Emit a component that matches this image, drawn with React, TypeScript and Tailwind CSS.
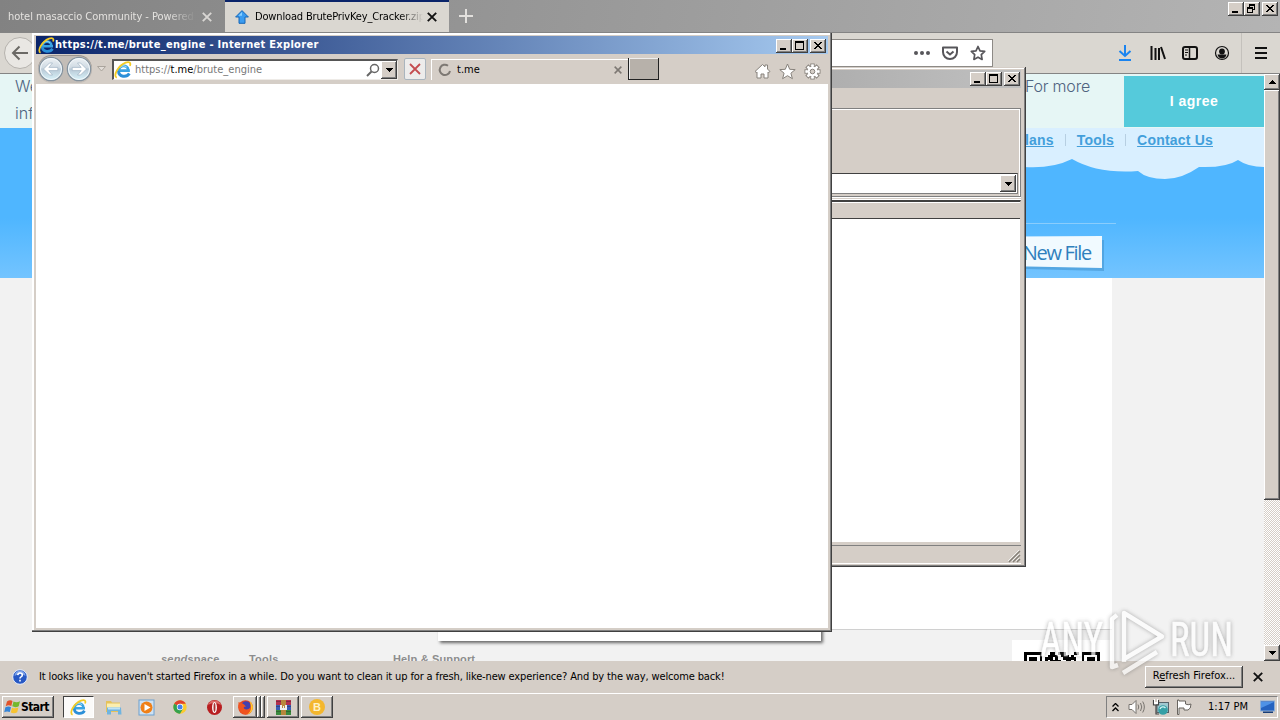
import type { ReactNode } from "react";

const UI = "font-['DejaVu_Sans_Condensed','DejaVu_Sans',sans-serif] [font-stretch:condensed]";
const RAISED =
    "bg-[#d5cec7] shadow-[inset_-1px_-1px_0_#404040,inset_1px_1px_0_#fff,inset_-2px_-2px_0_#808080]";

type CaptionKind = "min" | "max" | "restore" | "close";

function CaptionButton({ kind, className = "" }: { kind: CaptionKind; className?: string }) {
    return (
        <button className={`block h-[14px] w-4 shrink-0 ${RAISED} ${className}`}>
            <svg width="16" height="14" fill="none" stroke="#000" shapeRendering="crispEdges">
                {kind === "min" && <path d="M4 10h6" strokeWidth="2" />}
                {kind === "max" && (
                    <>
                        <path d="M3.5 3v8M11.5 3v8M3 10.5h9" />
                        <path d="M3 3h9" strokeWidth="2" />
                    </>
                )}
                {kind === "restore" && (
                    <>
                        <path d="M5.5 3v3M10.5 2v6M9 7.5h2M3.5 5v6M8.5 5v6M3 10.5h6" />
                        <path d="M5 3h6M3 6h6" strokeWidth="2" />
                    </>
                )}
                {kind === "close" && (
                    <path d="M4 3l7 7M5 3l7 7M11 3l-7 7M12 3l-7 7" shapeRendering="auto" />
                )}
            </svg>
        </button>
    );
}

function CaptionButtons({ restore = false }: { restore?: boolean }) {
    return (
        <div className="flex shrink-0">
            <CaptionButton kind="min" />
            <CaptionButton kind={restore ? "restore" : "max"} />
            <CaptionButton kind="close" className="ml-[2px]" />
        </div>
    );
}

function IeIcon({ size = 17 }: { size?: number }) {
    return (
        <svg width={size} height={size} viewBox="0 0 17 17" fill="none">
            <path d="M15 9.200H4.600c0-6 8.600-6 8.800-.6" stroke="#3aa3e2" strokeWidth="2.6" />
            <path d="M4.300 9.500c.1 6 7.800 6.200 10.200 2.300" stroke="#2b8fd8" strokeWidth="2.800" />
            <path d="M5.300 6.200c1.700-2.300 5-2.300 6.700-.3" stroke="#a5e0f9" strokeWidth="1" />
            <path
                d="M2.600 15.800C-1.200 14.200 3.600 4.600 11 1.600c3.400-1.300 5.300.1 4 2.900"
                stroke="#f3cb25"
                strokeWidth="1.700"
            />
        </svg>
    );
}

function Arrow({ up = false }: { up?: boolean }) {
    return (
        <svg width="7" height="4" shapeRendering="crispEdges">
            <path d={up ? "M0 4h7L3.5 0z" : "M0 0h7L3.5 4z"} />
        </svg>
    );
}

/* ---------- Firefox ---------- */

function CloseX({ color, size = 10 }: { color: string; size?: number }) {
    return (
        <svg width={size} height={size} viewBox="0 0 10 10" stroke={color} strokeWidth="1.9">
            <path d="M.8.8l8.4 8.4M9.2.8L.8 9.2" />
        </svg>
    );
}

function TabStrip() {
    return (
        <div className="flex h-8 shrink-0 bg-[linear-gradient(100deg,#828282,#b4b4b4)] text-[11px]">
            <div className="flex w-[225px] items-center pl-2 pt-[2px]">
                <span className="w-[188px] overflow-hidden whitespace-nowrap tracking-[-0.04px] text-[#e4e2df] [mask-image:linear-gradient(90deg,#000_160px,transparent_188px)]">
                    hotel masaccio Community - Powered by
                </span>
                <span className="ml-[6px]">
                    <CloseX color="#d8d6d3" />
                </span>
            </div>
            <div className="flex w-56 items-center border-t-2 border-[#0a246a] bg-[#dad7d1] pl-[10px]">
                <svg width="14" height="14" viewBox="0 0 14 14">
                    <path d="M7 .6L13.4 7H10v6.3H4V7H.6z" fill="#3b9cf0" stroke="#1667b8" />
                    <path d="M7 2L3.5 5.8H7z" fill="#8bd0ff" />
                </svg>
                <span className="ml-[6px] w-[169px] overflow-hidden whitespace-nowrap pt-px tracking-[-0.16px] text-black [mask-image:linear-gradient(90deg,#000_145px,transparent_168px)]">
                    Download BrutePrivKey_Cracker.zip
                </span>
                <span className="ml-[3px]">
                    <CloseX color="#111" />
                </span>
            </div>
            <svg className="ml-[10px] mt-[9px]" width="14" height="14" stroke="#e2e0dd" strokeWidth="2">
                <path d="M7 0v14M0 7h14" />
            </svg>
            <div className="ml-auto mr-[2px] mt-[2px]">
                <CaptionButtons restore />
            </div>
        </div>
    );
}

function NavBar() {
    return (
        <div className="flex h-[42px] shrink-0 items-center border-y border-[#848484] bg-[#dad7d1]">
            <div className="ml-1 flex size-8 shrink-0 items-center justify-center rounded-full border border-[#b5b2ad] bg-[#e9e7e3]">
                <svg width="18" height="16" fill="none" stroke="#6b6965" strokeWidth="2">
                    <path d="M17 8H2M8.5 1.5L2 8l6.500 6.500" />
                </svg>
            </div>
            <div className="ml-40 flex h-7 w-[797px] items-center justify-end border border-[#8d8a86] bg-white pr-[6px]">
                <svg width="16" height="4" fill="#57565a">
                    <circle cx="2" cy="2" r="2" />
                    <circle cx="8" cy="2" r="2" />
                    <circle cx="14" cy="2" r="2" />
                </svg>
                <svg className="ml-[12px]" width="16" height="16" fill="none" stroke="#57565a" strokeWidth="2">
                    <path d="M1 2.500h14v4.500c0 4-3 7-7 7s-7-3-7-7z" strokeLinejoin="round" />
                    <path d="M4.500 6.500L8 9.500l3.500-3" />
                </svg>
                <svg className="ml-3" width="16" height="16" fill="none" stroke="#57565a" strokeWidth="1.7">
                    <path d="M8 1.500l2 4.300 4.700.6-3.400 3.300.8 4.700L8 12.200l-4.100 2.200.8-4.700L1.300 6.400 6 5.800z" strokeLinejoin="round" />
                </svg>
            </div>
            <div className="ml-auto flex h-full items-center">
                <svg width="14" height="16" fill="none" stroke="#1a84f0" strokeWidth="2">
                    <path d="M7 0v11M1.500 6L7 11l5.500-5M1 15h12" />
                </svg>
                <svg className="ml-[18px]" width="16" height="14" stroke="#111" strokeWidth="2">
                    <path d="M1.500 0v14M5.500 2v12M9 2v12M11 1l4 12" />
                </svg>
                <svg className="ml-4" width="16" height="14" fill="none" stroke="#111" strokeWidth="2">
                    <rect x="1" y="1" width="14" height="12" rx="2" />
                    <path d="M7.500 1v12" strokeWidth="1.500" />
                    <path d="M3 4h3M3 6.500h3M3 9h2" strokeWidth="1" />
                </svg>
                <svg className="ml-4" width="16" height="16">
                    <circle cx="8" cy="8" r="6.500" fill="none" stroke="#111" strokeWidth="1.200" />
                    <circle cx="8" cy="6.500" r="2.900" fill="#111" />
                    <path d="M3.500 9.500h9c-.5 2.500-2.400 4-4.500 4s-4-1.500-4.500-4z" fill="#111" />
                </svg>
                <i className="ml-[11px] h-full w-px bg-[#c4c1bc]" />
                <svg className="ml-[13px] mr-[13px]" width="12" height="12" stroke="#111" strokeWidth="2">
                    <path d="M0 1h12M0 6h12M0 11h12" />
                </svg>
            </div>
        </div>
    );
}

function Scrollbar() {
    return (
        <div className="flex w-4 flex-col bg-[repeating-conic-gradient(#d5cec7_0_25%,#fff_0_50%)] bg-[length:2px_2px]">
            <div className={`flex h-4 items-center justify-center ${RAISED}`}>
                <Arrow up />
            </div>
            <div className={`h-[410px] ${RAISED}`} />
            <div className={`mt-auto flex h-4 items-center justify-center ${RAISED}`}>
                <Arrow />
            </div>
        </div>
    );
}

const QR_ROWS = [
    "11111110001101110001101111111",
    "10000010011110111010001000001",
    "10111010111010011111001011101",
    "10111010101111001101001011101",
];

function QrCode() {
    return (
        <div className="h-[21px] w-[100px] overflow-hidden bg-white pl-3 pt-3">
            <svg width="76" height="10.480" viewBox="0 0 29 4" shapeRendering="crispEdges">
                {QR_ROWS.map((row, y) =>
                    [...row].map((c, x) =>
                        c === "1" ? <rect key={`${x}-${y}`} x={x} y={y} width="1" height="1" /> : null
                    )
                )}
            </svg>
        </div>
    );
}

function Page() {
    return (
        <div className="flex min-w-0 flex-1 flex-col overflow-hidden bg-[#f2f2f2] font-['Liberation_Sans',sans-serif] [font-stretch:normal]">
            <div className="flex h-[54px] shrink-0 bg-[#e6f6f5] pt-[2px] text-[#4f6380]">
                <div className="flex flex-1 justify-between whitespace-nowrap pr-[34px] font-['Inter',sans-serif] text-[16px] font-light leading-[27px]">
                    <p className="ml-[15px] -mt-[3px]">
                        We use cookies
                        <br />
                        information
                    </p>
                    <p className="-mt-[3px] tracking-[-0.2px]">For more</p>
                </div>
                <button className="mb-px w-[140px] bg-[#55cadb] text-[14px] font-bold tracking-[0.5px] text-white">
                    I agree
                </button>
            </div>

            <div className="relative h-[150px] shrink-0 bg-[linear-gradient(#4fb6ff_60%,#73c4ff)]">
                <svg className="absolute right-0 top-0" width="264" height="56">
                    <path
                        d="M0 0H264V39Q248 39 238 32Q226 40 199 39Q182 51 165 51Q147 51 138 43Q98 46 72 31Q52 41 24 39L0 36Z"
                        fill="#d9efff"
                    />
                </svg>
                <div className="relative flex justify-end pr-[51px] pt-1 text-[14px] font-bold leading-[16px] text-[#439fdb]">
                    <a className="tracking-[0.2px] underline">Plans</a>
                    <i className="mx-[11px] mt-[2px] h-3 w-px bg-[#b7cfe2]" />
                    <a className="tracking-[0.2px] underline">Tools</a>
                    <i className="mx-[11px] mt-[2px] h-3 w-px bg-[#b7cfe2]" />
                    <a className="tracking-[0.2px] underline">Contact Us</a>
                </div>
                <div className="ml-auto mr-[148px] mt-[75px] h-px w-[300px] bg-[#8acdfc]" />
                <div className="relative ml-auto mr-[159px] mt-[12px] h-[35px] w-[160px]">
                    <svg className="absolute inset-0" width="162" height="37">
                        <path d="M0 4H159V35L0 31z" fill="#4594cf" opacity=".6" />
                        <path d="M0 1L157 0V32L0 29z" fill="#f1faff" />
                    </svg>
                    <span className="absolute right-[14px] top-[4px] whitespace-nowrap font-['Open_Sans',sans-serif] text-[20px] leading-[26px] tracking-[-1.300px] text-[#2f80bd]">
                        Upload New File
                    </span>
                </div>
            </div>

            <div className="mx-[152px] h-[352px] shrink-0 border-b border-[#d0d0d0] bg-white" />
            <div className="relative flex flex-1 pl-[161px] text-[11px] font-bold text-[#8d8d8d]">
                <span className="mt-[21px] w-[88px] tracking-[0.2px]">
                    <i>send</i>space
                </span>
                <span className="mt-[21px] w-[144px] tracking-[0.2px]">Tools</span>
                <span className="mt-[21px] tracking-[0.15px]">Help &amp; Support</span>
                <div className="absolute left-[438px] -top-2 h-[19px] w-[383px] bg-white shadow-[2px_2px_3px_#666]" />
                <div className="ml-auto mr-[152px] mt-[10px]">
                    <QrCode />
                </div>
            </div>
        </div>
    );
}

function Notification() {
    return (
        <div className="flex h-8 shrink-0 items-center bg-[#d5cec7] text-[11px] text-black">
            <svg className="ml-3" width="16" height="16">
                <circle cx="8" cy="8" r="7.300" fill="#2758c4" stroke="#e8eefb" />
                <path d="M2.500 7A5.500 5.500 0 0113.500 7Q8 3 2.500 7z" fill="#7da2e8" />
                <path d="M5.700 6.200Q6 4 8 4q2.300 0 2.300 2 0 1.200-1.300 1.900-1 .5-1 1.600M8 10.800v1.700" fill="none" stroke="#fff" strokeWidth="1.600" />
            </svg>
            <span className="ml-[11px] whitespace-nowrap pt-px tracking-[-0.135px]">
                It looks like you haven't started Firefox in a while. Do you want to clean it up for a fresh,
                like-new experience? And by the way, welcome back!
            </span>
            <button className={`-mt-px ml-auto h-[22px] w-[98px] whitespace-nowrap ${RAISED}`}>
                R<u>e</u>fresh Firefox...
            </button>
            <span className="ml-[10px] mr-[17px]">
                <CloseX color="#111" />
            </span>
        </div>
    );
}

/* ---------- Archive window behind IE ---------- */

function ArchiveWindow() {
    return (
        <div className="absolute left-[320px] top-[67px] flex h-[500px] w-[706px] flex-col bg-[#d5cec7] p-[3px] pr-[5px] shadow-[inset_-1px_-1px_0_#404040,inset_1px_1px_0_#d5cec7,inset_-2px_-2px_0_#808080,inset_2px_2px_0_#fff]">
            <div className="flex h-[18px] shrink-0 items-center justify-end bg-[linear-gradient(90deg,#808080,#c0c0c0)] pr-px">
                <CaptionButtons />
            </div>
            <div className="mt-5 flex h-[89px] shrink-0 flex-col justify-end border border-[#808080] pb-[2px] pr-[2px] shadow-[inset_0_1px_0_#fff,inset_-1px_0_0_#fff,0_1px_0_#fff]">
                <div className="flex h-[21px] justify-end border border-[#808080] border-t-[#404040] bg-white p-px">
                    <div className={`flex w-4 items-center justify-center ${RAISED}`}>
                        <Arrow />
                    </div>
                </div>
            </div>
            <div className="mt-[3px] flex-1 border border-[#d5cec7] border-t-2 border-t-[#404040] bg-white shadow-[0_-1px_0_#fff]">
                <div className="h-[17px] border-b border-[#404040] bg-[#d5cec7] shadow-[inset_0_1px_0_#fff]" />
            </div>
            <div className="mt-[2px] flex h-[19px] shrink-0 items-end justify-end border-b border-t border-b-white border-t-[#808080]">
                <svg width="13" height="13" stroke="#858078" strokeWidth="1.500">
                    <path d="M1 12L12 1M5 12l7-7M9 12l3-3" />
                    <path d="M0 11L11 0M4 11l7-7M8 11l3-3" stroke="#fff" strokeWidth=".7" />
                </svg>
            </div>
        </div>
    );
}

/* ---------- Internet Explorer ---------- */

function NavCircle({ flip = false }: { flip?: boolean }) {
    return (
        <svg className={flip ? "-scale-x-100" : ""} width="26" height="26" viewBox="0 0 26 26">
            <defs>
                <linearGradient id="orb" x2="0" y2="1">
                    <stop stopColor="#eef2f5" />
                    <stop offset=".45" stopColor="#cfdae3" />
                    <stop offset=".5" stopColor="#b9c9d6" />
                    <stop offset="1" stopColor="#d9f4fb" />
                </linearGradient>
            </defs>
            <circle cx="13" cy="13" r="11.700" fill="url(#orb)" stroke="#84929e" strokeWidth="1.200" />
            <circle cx="13" cy="13" r="10.500" fill="none" stroke="#f2f8fb" />
            <path
                d="M5.500 13l6-6h3l-3.700 4.400h9v3.200h-9l3.700 4.400h-3z"
                fill="#fff"
                stroke="#9fb3c4"
                strokeWidth=".7"
            />
        </svg>
    );
}

function GearIcon() {
    return (
        <svg width="17" height="17" viewBox="-8.500 -8.500 17 17">
            <g fill="#fff" stroke="#87827c" strokeWidth="1">
                {[0, 45, 90, 135].map((a) => (
                    <rect key={a} x="-1.700" y="-7.500" width="3.400" height="15" transform={`rotate(${a})`} />
                ))}
                <circle r="5.300" />
            </g>
            <g fill="#fff">
                {[0, 45, 90, 135].map((a) => (
                    <rect key={a} x="-1.200" y="-6.900" width="2.400" height="13.800" transform={`rotate(${a})`} />
                ))}
            </g>
            <circle r="2.300" fill="#d5cec7" stroke="#87827c" />
        </svg>
    );
}

function IeWindow() {
    return (
        <div className="absolute left-8 top-[33px] flex h-[599px] w-[800px] flex-col bg-[#d5cec7] p-[3px] pl-1 pr-1 shadow-[inset_-1px_-1px_0_#404040,inset_-2px_-2px_0_#808080,inset_2px_2px_0_#fff]">
            <div className="flex h-[18px] shrink-0 items-center bg-[linear-gradient(90deg,#0a246a,#a6caf0)] pl-[2px] pr-[2px]">
                <IeIcon />
                <span className="whitespace-nowrap pt-px text-[11px] font-bold tracking-[0.3px] text-white">
                    https://t.me/brute_engine - Internet Explorer
                </span>
                <div className="ml-auto pt-px">
                    <CaptionButtons />
                </div>
            </div>
            <div className="flex h-[30px] shrink-0 items-center text-[11px]">
                <div className="ml-[2px] flex h-[27px] items-center gap-[2px] rounded-full bg-[#c3bdb7] shadow-[0_-1px_0_#99938e]">
                    <NavCircle />
                    <NavCircle flip />
                </div>
                <svg className="ml-[5px]" width="9" height="6" fill="#e2ddd8" stroke="#aaa49d">
                    <path d="M.5.500h8L4.500 5z" />
                </svg>
                <div className="ml-[6px] flex h-[21px] w-[286px] items-center border border-[#eeebe7] border-l-2 border-t-2 border-l-[#555] border-t-[#555] bg-white">
                    <IeIcon size={18} />
                    <span className="ml-[3px] whitespace-nowrap pt-px tracking-[0.010px] text-[#777]">
                        https://<span className="text-black">t.me</span>/brute_engine
                    </span>
                    <svg className="ml-auto mr-px" width="14" height="14" fill="none" stroke="#666" strokeWidth="1.500">
                        <circle cx="8.500" cy="5.500" r="4" />
                        <path d="M5.500 8.500L1 13" strokeWidth="2" />
                    </svg>
                    <div className={`flex h-[18px] w-4 items-center justify-center ${RAISED}`}>
                        <Arrow />
                    </div>
                </div>
                <div className="ml-[6px] flex h-[22px] w-[22px] items-center justify-center rounded-[2px] border border-[#aab5be] bg-[#edeceb]">
                    <svg width="12" height="12" stroke="#c44c50" strokeWidth="1.800">
                        <path d="M1 1l10 10M11 1L1 11" />
                    </svg>
                </div>
                <div className="ml-[5px] flex h-[21px] w-[198px] items-center border-l border-t border-white pl-[6px] pr-[7px]">
                    <svg width="14" height="14" fill="none" stroke="#7d7873" strokeWidth="2">
                        <path d="M10 2.700A5.200 5.200 0 1012 8" />
                    </svg>
                    <span className="ml-[5px] pt-px text-black">t.me</span>
                    <span className="ml-auto">
                        <CloseX color="#7d7873" size={8} />
                    </span>
                </div>
                <div className="-ml-px mb-px h-[22px] w-[31px] border border-t-0 border-[#222] bg-[#b7b1aa] shadow-[inset_1px_1px_0_#eee]" />
                <div className="ml-auto mr-[7px] mt-1 flex items-center gap-2">
                    <svg width="17" height="16" fill="#fff" stroke="#87827c">
                        <path d="M1 8.500L8.500 1.500l2.500 2.300V2h2.500v4L16 8.500l-1.300 1-.7-.5v6h-4v-4H7v4H3V9l-.7.500z" />
                    </svg>
                    <svg width="17" height="17" fill="#fff" stroke="#87827c">
                        <path d="M8.500 1l2.200 5.300 5.500.3-4.300 3.600 1.500 5.500-4.900-3-4.900 3 1.500-5.500L.8 6.600l5.500-.3z" />
                    </svg>
                    <GearIcon />
                </div>
            </div>
            <div className="mb-px flex-1 bg-white" />
        </div>
    );
}

/* ---------- Taskbar ---------- */

function WindowsFlag() {
    return (
        <svg width="17" height="16" viewBox="0 0 17 16">
            <path d="M3 2.500Q6 .5 8.500 2L7.300 7Q4.500 5.600 1.700 7.200z" fill="#e2532a" />
            <path d="M9.500 2.500Q12.500 4 16 2.300L14.700 7.200Q11.500 9 8.300 7.300z" fill="#74b82e" />
            <path d="M1.400 8.300Q4.500 6.800 7 8.200L5.800 13Q3 11.700.2 13.200z" fill="#3585d8" />
            <path d="M8 8.700Q11.200 10 14.400 8.500L13.200 13.300Q10 15 6.800 13.500z" fill="#f7c331" />
        </svg>
    );
}

function FolderIcon() {
    return (
        <svg width="17" height="17">
            <path d="M1 2h5l1 1.500h8V13H1z" fill="#e5c25a" />
            <path d="M2 4.500h13v6H2z" fill="#fbeeb0" />
            <path d="M2 8.500h14l.5 7h-3.500v-3.500H6v3.500H2z" fill="#6fb4e0" />
            <path d="M3 8.500h12v2H3z" fill="#bfe2f5" />
        </svg>
    );
}

function MediaIcon() {
    return (
        <svg width="17" height="17">
            <rect x="1" y="1" width="15" height="15" fill="#cfe2f3" stroke="#6da0cf" />
            <circle cx="8.500" cy="8.500" r="6" fill="#f08018" />
            <path d="M6.500 5l6 3.500-6 3.500z" fill="#fff" />
        </svg>
    );
}

function ChromeIcon() {
    return (
        <svg width="16" height="16" viewBox="0 0 16 16">
            <circle cx="8" cy="8" r="6.700" fill="#fbcb2e" />
            <path d="M8 8L2.200 4.650A6.700 6.700 0 0113.800 4.650H8z" fill="#e0412f" />
            <path d="M2.200 4.650A6.700 6.700 0 008 14.700L11 9.700 8 8z" fill="#35a24e" />
            <circle cx="8" cy="8" r="3.200" fill="#fff" />
            <circle cx="8" cy="8" r="2.500" fill="#4282ea" />
        </svg>
    );
}

function OperaIcon() {
    return (
        <svg width="17" height="17">
            <circle cx="8.500" cy="8.500" r="7.500" fill="#b81e20" />
            <path d="M2 6a7 7 0 0113 0Q8 2 2 6z" fill="#dc6a67" />
            <ellipse cx="8.500" cy="8.500" rx="2.400" ry="5.600" fill="#fff" />
            <ellipse cx="8.500" cy="8.500" rx="1" ry="4.400" fill="#a33" />
        </svg>
    );
}

function FirefoxIcon() {
    return (
        <svg width="17" height="17">
            <circle cx="8.500" cy="8.500" r="7.300" fill="#e8431f" />
            <circle cx="9" cy="7.200" r="5" fill="#4340ae" />
            <path d="M1.500 3C4 4.500 5 3.500 7 5.500L9 7.500Q6 7.500 7 9.500q2 2 5 .3 3-2 1-7.300 4 4 2 8.500c-3 5.500-10 5.500-12.500.5Q.8 8.500 1.500 3z" fill="#f0541f" />
            <path d="M12.500 1.800Q17 6 15.600 10.500q-1.500 4-5.600 5Q14 12.500 14 9q0-3.500-1.500-7.200z" fill="#ffc92e" />
        </svg>
    );
}

function RarIcon() {
    return (
        <svg width="17" height="17" shapeRendering="crispEdges">
            <path d="M1 1h15v5H1z" fill="#b32f4d" />
            <path d="M1 6h15v5H1z" fill="#3859b4" />
            <path d="M1 11h15v5H1z" fill="#3a8a3d" />
            <path d="M1 2h15M1 7h15M1 12h15" stroke="#222" strokeOpacity=".35" />
            <path d="M6 1h5v15H6z" fill="#b8873c" />
            <path d="M5 6h2v3h1V7h1v2h1V6h2v5H5z" fill="#eee" />
        </svg>
    );
}

function BitcoinIcon() {
    return (
        <span className="flex size-4 items-center justify-center rounded-full bg-[#f4b72e] font-['Liberation_Sans',sans-serif] text-[11px] font-bold text-[#fff2c8]">
            B
        </span>
    );
}

function TaskSlot({ className, children }: { className: string; children: ReactNode }) {
    return <div className={`flex h-[22px] shrink-0 items-center justify-center ${className}`}>{children}</div>;
}

function Tray() {
    return (
        <div className="ml-auto mr-[2px] flex h-[22px] w-[172px] items-center border border-[#808080] border-b-white border-r-white">
            <svg className="ml-[5px]" width="7" height="9" fill="none" stroke="#000" strokeWidth="1.300">
                <path d="M.5 3.500l3-3 3 3M.5 8l3-3 3 3" />
            </svg>
            <svg className="ml-[9px]" width="18" height="16" fill="#fff" stroke="#77736e">
                <path d="M1 5.500h3l4-4v13l-4-4H1z" />
                <path d="M10 5.500q1.500 2.500 0 5M12.500 4q2.500 4 0 8M14.700 2.500q3.300 5.500 0 11" fill="none" />
            </svg>
            <svg className="ml-[6px]" width="18" height="17">
                <rect x="5" y="3.500" width="11.500" height="10" fill="#9fc8d0" stroke="#55626a" />
                <path d="M1.500 1v5h5V1M4 6v9h3" fill="none" stroke="#444" strokeWidth="1.200" />
                <path d="M2 0h1v3h2V0h1v5H2z" fill="#fff" />
                <circle cx="11" cy="11" r="4.800" fill="#35a0a6" />
                <path d="M8 10a3.300 3.300 0 015.500-1" stroke="#d2f3f3" strokeWidth="1.300" fill="none" />
            </svg>
            <svg className="ml-[6px]" width="17" height="16" fill="#fff" stroke="#68645f">
                <path d="M1.500 1v14.500h1.500V9h5v2h4q3-1 3-6-3 1.500-5.500 0V2H3V1z" />
            </svg>
            <span className="ml-[15px] whitespace-nowrap pt-px text-[11px] tracking-[0.02px] text-black">1:17 PM</span>
            <svg className="ml-auto mr-[2px]" width="15" height="14">
                <rect x=".5" y="1" width="14" height="10" fill="#2563c0" stroke="#8daed6" />
                <path d="M1 2h13L1 8z" fill="#4e92e6" />
                <path d="M3 11.500h10V13H3z" fill="#173d78" />
            </svg>
        </div>
    );
}

function Taskbar() {
    return (
        <div className="flex h-[27px] shrink-0 items-center border-t border-white bg-[#d5cec7] pl-[2px]">
            <button className={`flex h-[22px] w-[52px] items-center pl-[2px] text-[12px] font-bold text-black ${RAISED}`}>
                <WindowsFlag />
                <span className="tracking-[-0.600px]">Start</span>
            </button>
            <TaskSlot className="ml-[9px] w-[31px] border border-white border-l-[#404040] border-t-[#404040] bg-[#fbfaf9]">
                <IeIcon />
            </TaskSlot>
            <TaskSlot className="ml-[2px] w-[34px]"><FolderIcon /></TaskSlot>
            <TaskSlot className="-ml-px w-[34px]"><MediaIcon /></TaskSlot>
            <TaskSlot className="w-[34px]"><ChromeIcon /></TaskSlot>
            <TaskSlot className="w-[34px]"><OperaIcon /></TaskSlot>
            <TaskSlot className={`ml-[2px] w-[24px] ${RAISED}`}><FirefoxIcon /></TaskSlot>
            <div className={`h-[22px] w-1 ${RAISED}`} />
            <div className={`h-[22px] w-1 ${RAISED}`} />
            <TaskSlot className={`ml-[2px] w-8 ${RAISED}`}><RarIcon /></TaskSlot>
            <TaskSlot className={`ml-[2px] w-8 ${RAISED}`}><BitcoinIcon /></TaskSlot>
            <Tray />
        </div>
    );
}

function Watermark() {
    return (
        <svg
            className="absolute left-[1036px] top-[606px] drop-shadow-[0_0_2px_#555a]"
            width="204"
            height="72"
            fill="none"
            opacity=".7"
        >
            <g
                fill="#fff"
                stroke="#fff"
                strokeWidth=".6"
                fontFamily="Roboto, sans-serif"
                fontSize="48"
                fontWeight="400"
            >
                <text x="4" y="50" textLength="63" lengthAdjust="spacingAndGlyphs">ANY</text>
                <text x="134" y="50" textLength="63" lengthAdjust="spacingAndGlyphs">RUN</text>
            </g>
            <g stroke="#fff" strokeWidth="4.500" strokeLinejoin="round">
                <path d="M88 56V7l38 23.500L88 53" />
                <path d="M81 9l-5 4v48l6-2M87 67l34-21" />
            </g>
        </svg>
    );
}

export default function App() {
    return (
        <div className={`relative flex h-[720px] w-[1280px] select-none flex-col overflow-hidden ${UI}`}>
            <TabStrip />
            <NavBar />
            <div className="flex min-h-0 flex-1">
                <Page />
                <Scrollbar />
            </div>
            <Notification />
            <Taskbar />
            <ArchiveWindow />
            <IeWindow />
            <Watermark />
        </div>
    );
}
